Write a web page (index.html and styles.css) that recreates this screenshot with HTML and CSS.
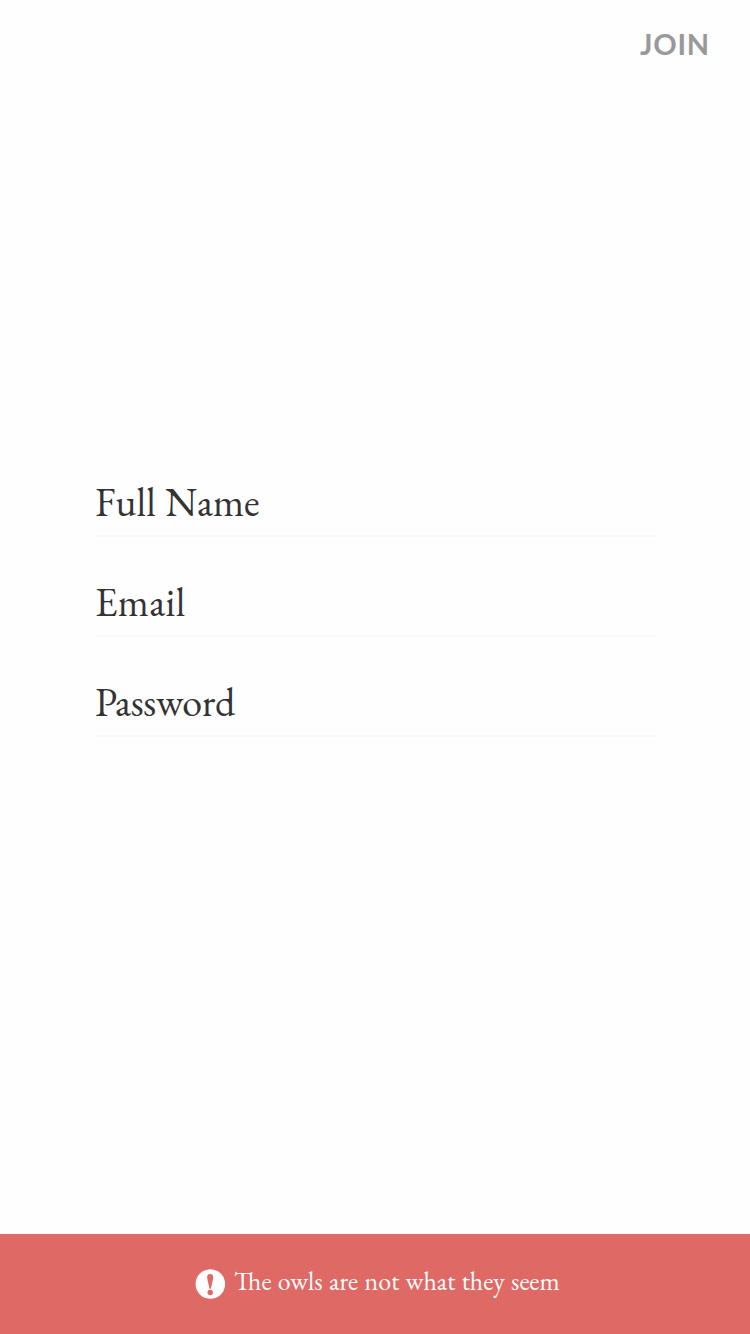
FILE: index.html
```html
<!DOCTYPE html>
<html lang="en">
<head>
<meta charset="utf-8">
<title>Join</title>
<link rel="stylesheet" href="styles.css">
</head>
<body>
<div class="screen">
  <header class="topbar"><button class="join" type="button">JOIN</button></header>
  <form class="form">
    <label class="field"><span class="label">Full Name</span></label>
    <label class="field"><span class="label email">Email</span></label>
    <label class="field"><span class="label password">Password</span></label>
  </form>
  <footer class="alert">
    <svg class="icon" viewBox="0 0 30 30" aria-hidden="true">
      <circle cx="15.400" cy="15" r="14.800" fill="#fff"/>
      <path d="M15.200 5C17.400 5 18.500 6.300 18.200 8.800C17.800 12.500 16.500 16 15.900 19.800H14.500C13.900 16 12.600 12.500 12.200 8.800C11.900 6.300 13 5 15.200 5Z" fill="#df6965"/>
      <circle cx="15.200" cy="23.500" r="2.700" fill="#df6965"/>
    </svg>
    <span class="message">The owls are not what they seem</span>
  </footer>
</div>
</body>
</html>
```
FILE: styles.css
```css
body { margin: 0; }
.screen { width: 750px; height: 1334px; display: flex; flex-direction: column; background: #fefefe; }
.topbar { height: 90px; display: flex; justify-content: flex-end; align-items: center; padding: 0 40px 2px 0; box-sizing: border-box; }
.join { border: 0; padding: 0; background: none; font: bold 29px/40px Lato, sans-serif; letter-spacing: 0.8px; color: #999; }
.form { flex: 1; padding: 347px 95px 0 95px; }
.field { display: flex; height: 98px; align-items: flex-end; border-bottom: 2px solid #f8f8f8; }
.label { font: 40px/66px "EB Garamond", "Liberation Serif", serif; color: #333; white-space: nowrap; word-spacing: 1.5px; }
.email { letter-spacing: 0.3px; }
.password { letter-spacing: -0.2px; }
.alert { height: 100px; display: flex; align-items: center; background: #df6965; color: #fff; padding-left: 195px; gap: 9px; }
.icon { width: 30px; height: 30px; }
.message { font: 26px/40px "EB Garamond", "Liberation Serif", serif; font-variant-ligatures: common-ligatures discretionary-ligatures; word-spacing: 1.1px; padding-bottom: 6px; white-space: nowrap; }
```
